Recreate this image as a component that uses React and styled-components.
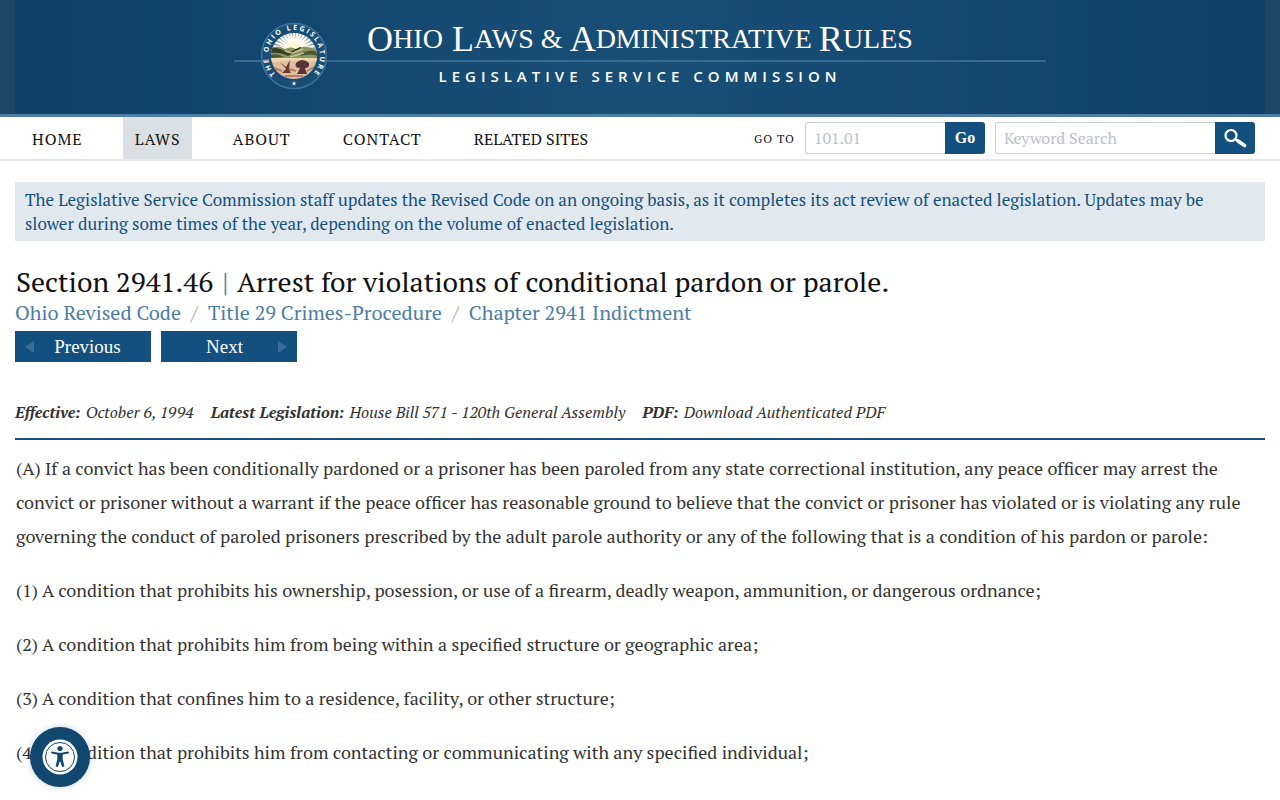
import React from 'react';
import styled, { createGlobalStyle } from 'styled-components';

const GlobalStyle = createGlobalStyle`
  * {
    box-sizing: border-box;
  }
  body {
    margin: 0;
    background: white;
    color: #333;
    font-family: 'PT Serif', 'Liberation Serif', serif;
  }
`

const Banner = styled.header`
  padding: 0 15px;
  border-bottom: 3px solid #4f7ea1;
  background: #1b4667;
`

const BannerInner = styled.div`
  display: flex;
  justify-content: center;
  padding: 20px 0 22px;
  background: linear-gradient(90deg, #0d416a, #194e77 50%, #0d416a);
`

const Brand = styled.div`
  display: grid;
  grid-template-columns: 132px minmax(0, 1fr) 132px;
  grid-template-rows: 40px 2px 30px;
  width: 812px;
  color: white;
`

const Rule = styled.div`
  grid-column: 1 / 4;
  grid-row: 2;
  background: #356c94;
`

const Seal = styled.svg`
  grid-column: 1;
  grid-row: 1 / 4;
  z-index: 1;
  width: 68px;
  height: 68px;
  margin-left: 26px;
  margin-top: 2px;
`

const BrandName = styled.h1`
  display: flex;
  justify-content: center;
  grid-column: 2;
  grid-row: 1;
  margin: 0;
  font-family: 'Liberation Serif', serif;
  font-size: 36px;
  font-weight: normal;
  line-height: 38px;
  white-space: pre;

  span {
    font-size: 28px;
  }
`

const BrandSub = styled.div`
  grid-column: 2;
  grid-row: 3;
  font-family: 'Open Sans', sans-serif;
  font-size: 15px;
  font-weight: 600;
  line-height: 28px;
  letter-spacing: 5px;
  text-align: center;
  white-space: nowrap;
`

const NavBar = styled.nav`
  display: flex;
  justify-content: space-between;
  padding: 0 25px 0 20px;
  border-bottom: 2px solid #e6e8e9;
`

const Menu = styled.div`
  display: flex;
  gap: 28px;
`

const MenuLink = styled.a`
  padding: 0 12px;
  background: ${props => props.$active ? '#dae0e4' : 'transparent'};
  color: #111;
  font-size: 16px;
  line-height: 44px;
  height: 42px;
  letter-spacing: ${props => props.$plain ? 'normal' : '1px'};
  text-decoration: none;
`

const Searches = styled.div`
  display: flex;
  gap: 10px;
  padding-top: 5px;
`

const SearchForm = styled.form`
  display: flex;
  height: 32px;
`

const Label = styled.label`
  margin-right: 10px;
  color: #111;
  font-size: 12px;
  line-height: 34px;
  letter-spacing: 1px;
`

const Input = styled.input`
  width: ${props => props.$wide ? '220px' : '140px'};
  padding: 0 8px;
  border: 1px solid #c9d1d9;
  border-right: none;
  border-radius: 3px 0 0 3px;
  font-family: inherit;
  font-size: 16px;

  &::placeholder {
    color: #b8c1cc;
    opacity: 1;
  }
`

const SubmitButton = styled.button`
  display: flex;
  align-items: center;
  justify-content: center;
  width: 40px;
  padding: 0;
  border: none;
  border-radius: 0 3px 3px 0;
  background: #14507f;
  color: white;
  font-family: 'Liberation Serif', serif;
  font-size: 16px;
  font-weight: bold;
`

const Main = styled.main`
  padding: 21px 15px;
`

const Notice = styled.p`
  margin: 0 0 22px;
  padding: 6px 10px 5px;
  background: #e1e8ee;
  color: #14507f;
  font-size: 17px;
  line-height: 24px;
`

const Title = styled.h2`
  margin: 0;
  padding-left: 1px;
  color: #111;
  font-size: 28px;
  font-weight: normal;
  line-height: 37px;

  span {
    margin: 0 2px;
    color: #4b7ea5;
  }
`

const Breadcrumbs = styled.div`
  display: flex;
  gap: 10px;
  color: #b0a8a0;
  font-size: 20px;
  line-height: 26px;
`

const Crumb = styled.a`
  color: #4b7ea5;
  text-decoration: none;
`

const Pager = styled.div`
  display: flex;
  gap: 10px;
  margin: 5px 0 38px;
`

const PagerLink = styled.a`
  display: flex;
  align-items: center;
  width: 136px;
  height: 31px;
  padding: 0 10px;
  background: #14507f;
  color: white;
  font-family: 'Liberation Serif', serif;
  font-size: 19px;
  text-decoration: none;

  span {
    flex: 1;
    text-align: center;
  }
`

const Arrow = styled.svg`
  width: 9px;
  height: 12px;
  fill: #3a6f9c;
`

const Facts = styled.dl`
  display: flex;
  gap: 17px;
  margin: 0;
  padding-bottom: 14px;
  border-bottom: 2px solid #14507f;
  font-size: 16px;
  font-style: italic;
  line-height: 24px;
`

const Fact = styled.div`
  display: flex;
  gap: 5px;

  dt {
    font-weight: bold;
  }

  dd {
    margin: 0;
  }

  a {
    color: inherit;
    text-decoration: none;
  }
`

const Statute = styled.section`
  padding: 11px 1px 0;
  font-size: 18px;
  line-height: 34px;

  p {
    margin: 0 0 20px;
  }
`

const AccessButton = styled.button`
  position: fixed;
  left: 30px;
  bottom: 13px;
  width: 60px;
  height: 60px;
  padding: 0;
  border: none;
  border-radius: 50%;
  background: #11466f;
  box-shadow: 0 0 6px rgba(17, 70, 111, 0.25);

  svg {
    display: block;
    margin: auto;
  }
`

const menu = ['HOME', 'LAWS', 'ABOUT', 'CONTACT', 'RELATED SITES']

const paragraphs = [
  '(A) If a convict has been conditionally pardoned or a prisoner has been paroled from any state correctional institution, any peace officer may arrest the convict or prisoner without a warrant if the peace officer has reasonable ground to believe that the convict or prisoner has violated or is violating any rule governing the conduct of paroled prisoners prescribed by the adult parole authority or any of the following that is a condition of his pardon or parole:',
  '(1) A condition that prohibits his ownership, posession, or use of a firearm, deadly weapon, ammunition, or dangerous ordnance;',
  '(2) A condition that prohibits him from being within a specified structure or geographic area;',
  '(3) A condition that confines him to a residence, facility, or other structure;',
  '(4) A condition that prohibits him from contacting or communicating with any specified individual;',
  '(5) A condition that prohibits him from associating with a specified individual.',
]

const rays = Array.from({ length: 17 }, (_, i) => Math.PI * i / 16)

const OhioSeal = () => (
  <Seal viewBox="0 0 68 68" aria-label="The Ohio Legislature">
    <defs>
      <path id="sealRing" d="M34 60 A26 26 0 1 1 34.1 60" />
      <clipPath id="sealClip"><circle cx="34" cy="34" r="23" /></clipPath>
    </defs>
    <circle cx="34" cy="34" r="32.5" fill="#174d77" stroke="#40749b" strokeWidth="1.5" />
    <g clipPath="url(#sealClip)">
      <rect x="10" y="10" width="48" height="48" fill="#e0bf9f" />
      <rect x="10" y="10" width="48" height="19" fill="#6f93af" />
      {rays.map(a => (
        <line key={a} x1="34" y1="28" x2={34 + 26 * Math.cos(a)} y2={28 - 26 * Math.sin(a)} stroke="#fffdf2" strokeWidth="2.4" />
      ))}
      <circle cx="34" cy="27" r="8" fill="#fff6d8" />
      <path d="M10 27 Q18 22 25 27 Q31 24 36 27 Q44 22 58 28 V37 H10z" fill="#8c9363" />
      <path d="M10 26 Q19 25 28 31 L40 25 L41 26 L28 34 Q20 30 10 31z" fill="#363f2a" />
      <path d="M42 31 Q50 27 58 30 V34 Q50 31 40 34z M10 33 Q18 31 24 35 L10 36z" fill="#4c5535" />
      <path d="M25 29 L32 31 L43 27 M30 35 L44 31" fill="none" stroke="#d0cf98" strokeWidth="1.3" />
      <path d="M10 36 H58 V40 Q34 36 10 41z" fill="#efd5ab" />
      <path d="M20 40 L26 45 L30 38 L29 47 L31 51 H22 L26 47z" fill="#633934" />
      <path d="M36 41 Q42 35 49 41 Q50 46 45 46 L47 52 H37 L40 46 Q34 46 36 41z" fill="#573336" />
      <path d="M14 46 L22 49 M29 47 L36 49 M47 49 L54 45 M25 54 H43" stroke="#b27e69" strokeWidth="2" />
    </g>
    <text fill="white" fontFamily="Open Sans, sans-serif" fontSize="7" fontWeight="700" letterSpacing="2">
      <textPath href="#sealRing" startOffset="50%" textAnchor="middle">THE OHIO LEGISLATURE</textPath>
    </text>
    <path d="M34 59 L34.6 60.7 L36.6 60.7 L35 61.8 L35.6 63.6 L34 62.5 L32.4 63.6 L33 61.8 L31.4 60.7 L33.4 60.7z" fill="white" />
  </Seal>
)

const App = () => (
  <>
    <GlobalStyle />
    <Banner>
      <BannerInner>
        <Brand>
          <Rule />
          <OhioSeal />
          <BrandName>O<span>HIO</span> L<span>AWS &amp; </span>A<span>DMINISTRATIVE </span>R<span>ULES</span></BrandName>
          <BrandSub>LEGISLATIVE SERVICE COMMISSION</BrandSub>
        </Brand>
      </BannerInner>
    </Banner>
    <NavBar>
      <Menu>
        {menu.map(item => (
          <MenuLink key={item} href="#" $active={item === 'LAWS'} $plain={item === 'RELATED SITES'}>{item}</MenuLink>
        ))}
      </Menu>
      <Searches>
        <SearchForm>
          <Label htmlFor="goto">GO TO</Label>
          <Input id="goto" placeholder="101.01" />
          <SubmitButton type="submit">Go</SubmitButton>
        </SearchForm>
        <SearchForm>
          <Input $wide aria-label="Keyword Search" placeholder="Keyword Search" />
          <SubmitButton type="submit" aria-label="Search">
            <svg width="24" height="20" viewBox="0 0 24 20" fill="none" stroke="white">
              <circle cx="8" cy="7.5" r="5.5" strokeWidth="2.2" />
              <path d="M12 11 L15 13" strokeWidth="2.5" />
              <path d="M15 13 L21.5 17.5" strokeWidth="3.6" strokeLinecap="round" />
            </svg>
          </SubmitButton>
        </SearchForm>
      </Searches>
    </NavBar>
    <Main>
      <Notice>The Legislative Service Commission staff updates the Revised Code on an ongoing basis, as it completes its act review of enacted legislation. Updates may be slower during some times of the year, depending on the volume of enacted legislation.</Notice>
      <Title>Section 2941.46 <span>|</span> Arrest for violations of conditional pardon or parole.</Title>
      <Breadcrumbs>
        <Crumb href="#">Ohio Revised Code</Crumb>/
        <Crumb href="#">Title 29 Crimes-Procedure</Crumb>/
        <Crumb href="#">Chapter 2941 Indictment</Crumb>
      </Breadcrumbs>
      <Pager>
        <PagerLink href="#">
          <Arrow viewBox="0 0 9 12"><path d="M9 0V12L0 6z" /></Arrow>
          <span>Previous</span>
        </PagerLink>
        <PagerLink href="#">
          <span>Next</span>
          <Arrow viewBox="0 0 9 12"><path d="M0 0V12L9 6z" /></Arrow>
        </PagerLink>
      </Pager>
      <Facts>
        <Fact><dt>Effective:</dt><dd>October 6, 1994</dd></Fact>
        <Fact><dt>Latest Legislation:</dt><dd>House Bill 571 - 120th General Assembly</dd></Fact>
        <Fact><dt>PDF:</dt><dd><a href="#">Download Authenticated PDF</a></dd></Fact>
      </Facts>
      <Statute>
        {paragraphs.map(text => <p key={text}>{text}</p>)}
      </Statute>
    </Main>
    <AccessButton aria-label="Accessibility">
      <svg width="36" height="36" viewBox="0 0 36 36">
        <circle cx="18" cy="18" r="17.5" fill="white" />
        <circle cx="18" cy="18" r="14.5" fill="none" stroke="#11466f" />
        <circle cx="18" cy="9.5" r="2.6" fill="#11466f" />
        <path d="M10 13.5 L16 14.8 H20 L26 13.5" fill="none" stroke="#11466f" strokeWidth="2" strokeLinecap="round" />
        <path d="M15.3 14 H20.7 V20 L22.4 27.5 L20.2 28 L18 22 L15.8 28 L13.6 27.5 L15.3 20z" fill="#11466f" />
      </svg>
    </AccessButton>
  </>
)

export default App
